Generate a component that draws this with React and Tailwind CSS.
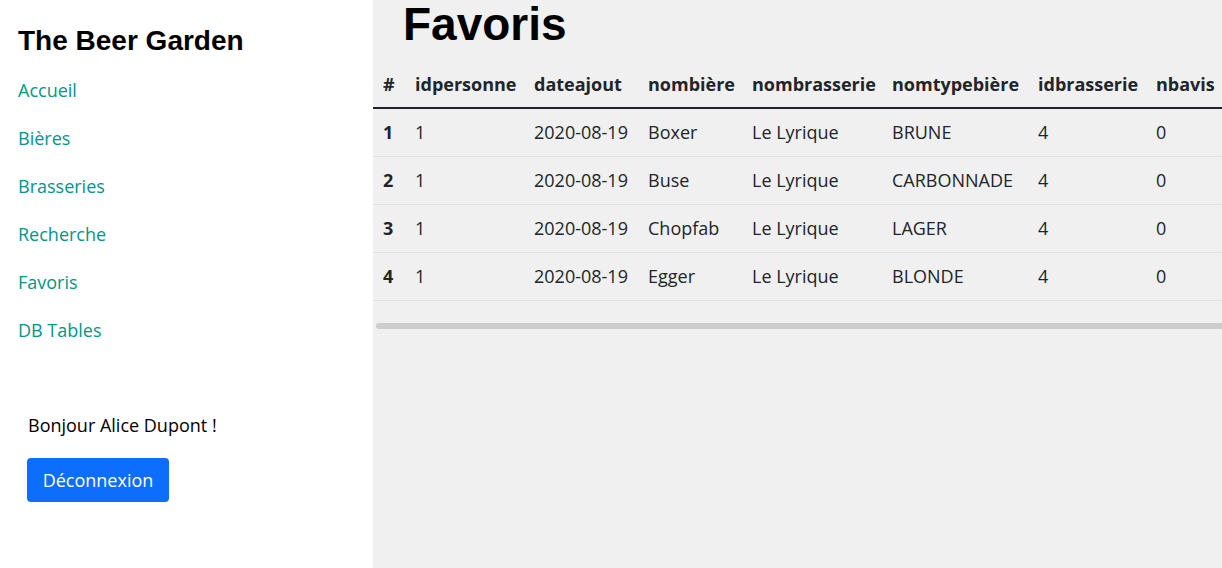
import React from "react";

const rows = [
  ["1", "1", "2020-08-19", "Boxer", "Le Lyrique", "BRUNE", "4", "0"],
  ["2", "1", "2020-08-19", "Buse", "Le Lyrique", "CARBONNADE", "4", "0"],
  ["3", "1", "2020-08-19", "Chopfab", "Le Lyrique", "LAGER", "4", "0"],
  ["4", "1", "2020-08-19", "Egger", "Le Lyrique", "BLONDE", "4", "0"],
];
const headers = ["#", "idpersonne", "dateajout", "nombière", "nombrasserie", "nomtypebière", "idbrasserie", "nbavis"];
const widths = ["w-[32px]", "w-[119px]", "w-[114px]", "w-[104px]", "w-[140px]", "w-[146px]", "w-[118px]", "w-[120px]"];

export default function App() {
  return (
    <div className="flex h-[568px] w-[1222px] overflow-hidden font-['Open_Sans',sans-serif]">
      <aside className="w-[373px] shrink-0 bg-white flex flex-col">
        <h1 className="font-['Liberation_Sans',Arial,sans-serif] font-bold text-[28px] leading-[32px] text-black pl-[18px] pt-[25px]">
          The Beer Garden
        </h1>
        <nav className="flex flex-col pl-[18px] mt-[9px]">
          {["Accueil", "Bières", "Brasseries", "Recherche", "Favoris", "DB Tables"].map((l) => (
            <a key={l} href="#" className="text-[#009688] text-[18px] leading-[24px] py-[12px]">
              {l}
            </a>
          ))}
        </nav>
        <div className="pl-[27px] mt-[59px]">
          <p className="text-[18px] leading-[24px] text-black pl-[1px]">Bonjour Alice Dupont !</p>
          <button className="mt-[21px] w-[142px] h-[44px] bg-[#0d6efd] text-white text-[18px] rounded-[4px]">
            Déconnexion
          </button>
        </div>
      </aside>
      <main className="flex-1 bg-[#f0f0f0] overflow-hidden">
        <h1 className="font-['Liberation_Sans',Arial,sans-serif] font-bold text-[46px] leading-[48px] text-black pl-[30px] mb-[12px]">
          Favoris
        </h1>
        <div className="w-[849px] overflow-hidden">
          <table className="table-fixed border-collapse w-[893px] text-[18px] text-[#212529]">
            <thead>
              <tr className="border-b-2 border-[#212529]">
                {headers.map((h, i) => (
                  <th key={h} className={`${widths[i]} text-left font-bold px-[10px] h-[48px] leading-[24px] whitespace-nowrap`}>
                    {h}
                  </th>
                ))}
              </tr>
            </thead>
            <tbody>
              {rows.map((r) => (
                <tr key={r[0]} className="border-b border-[#dee2e6]">
                  {r.map((c, i) => (
                    <td key={i} className={`px-[10px] h-[48px] leading-[24px] whitespace-nowrap ${i === 0 ? "font-bold" : ""}`}>
                      {c}
                    </td>
                  ))}
                </tr>
              ))}
            </tbody>
          </table>
          <div className="mt-[22px] ml-[3px] h-[6px] w-[900px] rounded-full bg-[#cdcdcd]" />
        </div>
      </main>
    </div>
  );
}
